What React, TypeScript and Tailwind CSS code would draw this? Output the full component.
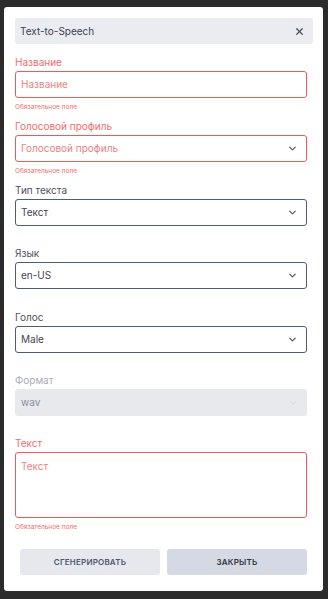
import { X, ChevronDown } from 'lucide-react';

type Field = {
  label: string;
  value: string;
  kind: 'input' | 'select' | 'disabled' | 'textarea';
  error?: boolean;
  placeholder?: boolean;
  gap: string;
};

const fields: Field[] = [
  { label: 'Название', value: 'Название', kind: 'input', error: true, placeholder: true, gap: 'h-[22px]' },
  { label: 'Голосовой профиль', value: 'Голосовой профиль', kind: 'select', error: true, placeholder: true, gap: 'h-[22px]' },
  { label: 'Тип текста', value: 'Текст', kind: 'select', gap: 'h-[21px]' },
  { label: 'Язык', value: 'en-US', kind: 'select', gap: 'h-[22px]' },
  { label: 'Голос', value: 'Male', kind: 'select', gap: 'h-[21px]' },
  { label: 'Формат', value: 'wav', kind: 'disabled', gap: 'h-[21px]' },
  { label: 'Текст', value: 'Текст', kind: 'textarea', error: true, placeholder: true, gap: 'h-[22px]' },
];

const FormField = ({ f }: { f: Field }) => {
  const labelColor = f.error ? 'text-[#f26d6d]' : f.kind === 'disabled' ? 'text-[#a9acb6]' : 'text-[#4d5160]';
  const border = f.error ? 'border-[#ec5a5a]' : 'border-[#515a76]';

  return (
    <div className="flex flex-col">
      <label className={`h-[12px] text-[10px] leading-[12px] ${labelColor}`}>{f.label}</label>
      <div className="h-[3px]" />
      {f.kind === 'textarea' ? (
        <div className={`h-[66px] rounded-[3px] border ${border} px-[5px] pt-[7px] text-[10px] leading-[12px] text-[#f07f7f]`}>
          {f.value}
        </div>
      ) : f.kind === 'disabled' ? (
        <div className="flex h-[27px] items-center justify-between rounded-[3px] bg-[#e8e9ed] pl-[6px] pr-[9px] text-[10px] text-[#8a8e9a]">
          <span>{f.value}</span>
          <ChevronDown size={10} strokeWidth={2} className="text-[#d0d3da]" />
        </div>
      ) : (
        <div
          className={`flex h-[27px] items-center justify-between rounded-[3px] border ${border} pl-[5px] pr-[8px] text-[10px] ${
            f.placeholder ? 'text-[#f07f7f]' : 'text-[#3f4352]'
          }`}>
          <span>{f.value}</span>
          {f.kind === 'select' && <ChevronDown size={11} strokeWidth={2.6} className="text-[#4f5670]" />}
        </div>
      )}
      <div className={`${f.gap} pt-[5px]`}>
        {f.error && <p className="text-[6.5px] leading-[8px] text-[#f26d6d]">Обязательное поле</p>}
      </div>
    </div>
  );
};

const App = () => {
  return (
    <div className="h-[599px] w-[328px] bg-[#2b2b2b] pl-[4px] pt-[7px] font-['Inter',sans-serif]">
      <div className="flex h-[584px] w-[319px] flex-col rounded-[3px] bg-white pl-[11px] pr-[10px] pt-[11px]">
        <div className="flex h-[26px] items-center justify-between rounded-[3px] bg-[#ebecf1] pl-[5px] pr-[8px]">
          <span className="text-[10px] text-[#3c4050]">Text-to-Speech</span>
          <X size={11} strokeWidth={2.6} className="text-[#4a4f5e]" />
        </div>
        <div className="mt-[12px] flex flex-col pr-[6px]">
          {fields.map((f) => (
            <FormField key={f.label} f={f} />
          ))}
          <div className="mt-[9px] flex gap-[7px] pl-[5px]">
            <button className="h-[26px] w-[140px] rounded-[3px] bg-[#e6e8ee] text-[8px] font-semibold tracking-[0.2px] text-[#4f5670]">
              СГЕНЕРИРОВАТЬ
            </button>
            <button className="h-[26px] w-[140px] rounded-[3px] bg-[#d4d9e3] text-[8px] font-semibold tracking-[0.2px] text-[#2f3340]">
              ЗАКРЫТЬ
            </button>
          </div>
        </div>
      </div>
    </div>
  );
};

export default App;
